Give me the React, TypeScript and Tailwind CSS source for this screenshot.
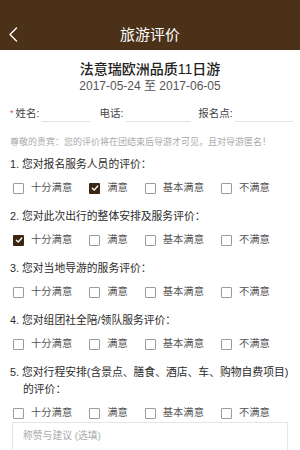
import { memo, useState } from 'react'

type Question = {
    id: number;
    title: string;
    second?: string;
};

const QUESTIONS: Question[] = [
    { id: 1, title: '1. 您对报名服务人员的评价：' },
    { id: 2, title: '2. 您对此次出行的整体安排及服务评价：' },
    { id: 3, title: '3. 您对当地导游的服务评价：' },
    { id: 4, title: '4. 您对组团社全陪/领队服务评价：' },
    { id: 5, title: '5. 您对行程安排(含景点、膳食、酒店、车、购物自费项目)', second: '的评价：' },
];

const OPTIONS = ['十分满意', '满意', '基本满意', '不满意'];

const Checkbox = ({ checked }: { checked: boolean }) => (
    <span
        className={
            checked
                ? 'flex h-[11px] w-[11px] shrink-0 items-center justify-center rounded-[1px] bg-[#3b2711]'
                : 'h-[11px] w-[11px] shrink-0 rounded-[1px] border border-[#9a9a9a] bg-white'
        }
    >
        {checked && (
            <svg width="8" height="8" viewBox="0 0 8 8" fill="none">
                <path d="M1.3 4.2 L3.2 6 L6.8 2" stroke="#fff" strokeWidth="1.3" strokeLinecap="round" strokeLinejoin="round" />
            </svg>
        )}
    </span>
);

const App: React.FC = () => {
    // STATE
    const [answers, setAnswers] = useState<Record<number, number>>({ 1: 1, 2: 0 });

    // HANDLE PICK
    const handlePick = (q: number, opt: number) => {
        setAnswers({ ...answers, [q]: answers[q] === opt ? -1 : opt });
    };

    return (
        <div className="h-[450px] w-[300px] overflow-hidden bg-white font-['Liberation_Sans','Noto_Sans_CJK_SC',sans-serif]">
            {/* HEADER */}
            <div className="relative flex h-[50px] items-center justify-center bg-[#4a3118] pt-5">
                <svg className="absolute left-[8px] top-[27px]" width="10" height="15" viewBox="0 0 10 15" fill="none">
                    <path d="M8.5 1 L2 7.5 L8.5 14" stroke="#fff" strokeWidth="1.4" strokeLinecap="round" strokeLinejoin="round" />
                </svg>
                <span className="text-[15px] leading-[30px] text-white">旅游评价</span>
            </div>

            {/* TOUR INFO */}
            <div className="pt-[10px] text-center">
                <div className="text-[14px] font-medium leading-[18px] text-[#222]">法意瑞欧洲品质11日游</div>
                <div className="text-[12px] leading-[16px] text-[#555]">2017-05-24 至 2017-06-05</div>
            </div>

            {/* FIELDS */}
            <div className="mt-[10px] flex h-[20px] items-center whitespace-nowrap px-[10px] text-[10.5px] text-[#444]">
                <span className="mr-[2px] shrink-0 text-[9px] text-[#e04b4b]">*</span>
                <span className="shrink-0">姓名:</span>
                <span className="ml-[3px] mt-[14px] w-[48px] shrink-0 border-b border-[#e2e2e2]"></span>
                <span className="ml-[9px] shrink-0">电话:</span>
                <span className="ml-[3px] mt-[14px] w-[65px] shrink-0 border-b border-[#e2e2e2]"></span>
                <span className="ml-[7px] shrink-0">报名点:</span>
                <span className="ml-[2px] mt-[14px] w-[58px] shrink-0 border-b border-[#e2e2e2]"></span>
            </div>

            <div className="mt-[11px] whitespace-nowrap px-[10px] text-[9px] leading-[14px] text-[#aaa]">
                尊敬的贵宾：您的评价将在团结束后导游才可见，且对导游匿名！
            </div>

            {/* QUESTIONS */}
            <div className="mt-[6px] flex flex-col">
                {QUESTIONS.map((q) => (
                    <div key={q.id} className="mb-[9px]">
                        <div className="whitespace-nowrap px-[10px] text-[10.8px] leading-[18px] text-[#2b2b2b]">
                            {q.title}
                            {q.second && <div className="-mt-[1px] pl-[13px]">{q.second}</div>}
                        </div>
                        <div className="mt-[5px] flex h-[20px] items-center gap-[17px] whitespace-nowrap pl-[13px] text-[10.3px] text-[#555]">
                            {OPTIONS.map((opt, i) => (
                                <button
                                    key={opt}
                                    type="button"
                                    onClick={() => handlePick(q.id, i)}
                                    className="flex items-center gap-[7px]"
                                >
                                    <Checkbox checked={answers[q.id] === i} />
                                    <span>{opt}</span>
                                </button>
                            ))}
                        </div>
                    </div>
                ))}
            </div>

            {/* SUGGESTION */}
            <div className="mx-[12px] -mt-[10px] h-[60px] border border-[#e6e6e6] px-[10px] pt-[6px] text-[9.8px] text-[#aaa]">
                称赞与建议 (选填)
            </div>
        </div>
    );
};

export default memo(App)
